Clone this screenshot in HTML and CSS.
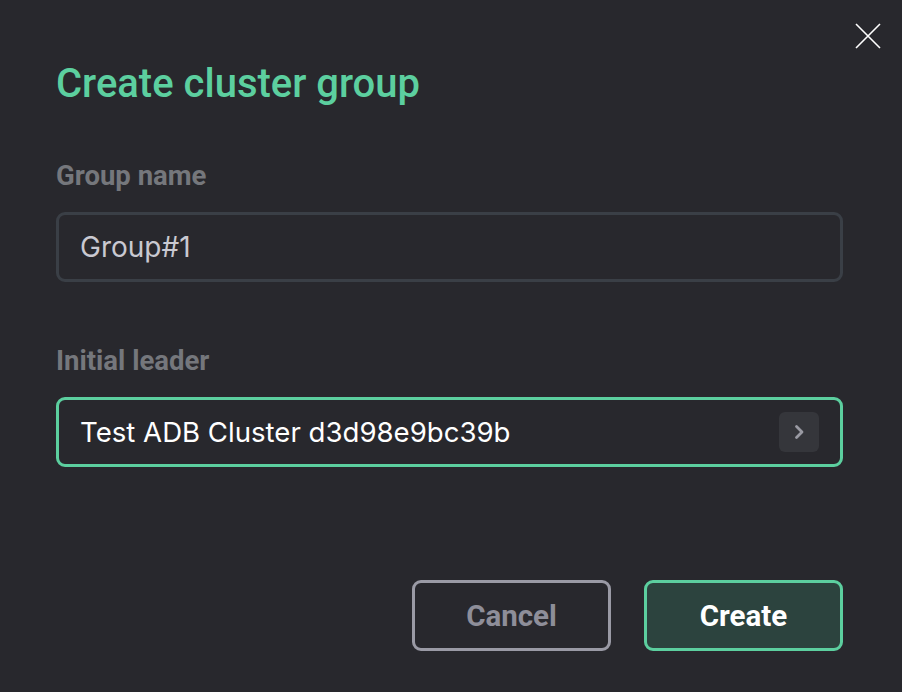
FILE: index.html
```html
<!doctype html>
<html>
    <head>
        <title>Create cluster group</title>
        <link rel="stylesheet" href="styles.css">
    </head>
    <body>
        <div class="modal">
            <button class="close" aria-label="Close">
                <svg width="26" height="26" viewBox="0 0 26 26">
                    <path d="M1 1L25 25M25 1L1 25" stroke="#fff" stroke-width="1.6" fill="none" />
                </svg>
            </button>

            <h1 class="title">Create cluster group</h1>

            <div class="field">
                <label class="label">Group name</label>
                <div class="input">Group#1</div>
            </div>

            <div class="field">
                <label class="label">Initial leader</label>
                <div class="input select">
                    <span>Test ADB Cluster d3d98e9bc39b</span>
                    <span class="chev">
                        <svg width="12" height="16" viewBox="0 0 12 16">
                            <path d="M3.5 2.5L9 8L3.5 13.5" stroke="#9a9aa3" stroke-width="2.8" fill="none" stroke-linecap="round" stroke-linejoin="round" />
                        </svg>
                    </span>
                </div>
            </div>

            <div class="actions">
                <button class="btn cancel">Cancel</button>
                <button class="btn create">Create</button>
            </div>
        </div>
    </body>
</html>
```

FILE: styles.css
```css
* {
    box-sizing: border-box;
}
html,
body {
    margin: 0;
    padding: 0;
    background: #28282d;
}

.modal {
    width: 902px;
    height: 692px;
    position: relative;
    padding: 56px 59px 0 56px;
    font-family: Roboto, "Noto Sans", sans-serif;

    .close {
        position: absolute;
        top: 23px;
        right: 21px;
        background: none;
        border: 0;
        padding: 0;
        cursor: pointer;
        display: flex;
    }

    .title {
        margin: 0;
        font-size: 40px;
        font-weight: 500;
        line-height: 56px;
        color: #5ccf9f;
    }
}

.field {
    margin-top: 48px;

    & + .field {
        margin-top: 63px;
    }

    .label {
        display: block;
        font-size: 27.5px;
        font-weight: 700;
        line-height: 32px;
        color: #75777c;
        margin-bottom: 20px;
    }
}

.input {
    height: 70px;
    border: 3px solid #3a3f46;
    border-radius: 9px;
    padding: 0 21px;
    display: flex;
    align-items: center;
    font-family: Inter, "Noto Sans", sans-serif;
    font-size: 28px;
    color: #c9c9d1;

    &.select {
        border-color: #5ccf9f;
        color: #fff;
        font-size: 27.6px;
        justify-content: space-between;
        padding-right: 21px;
    }

    .chev {
        width: 40px;
        height: 40px;
        border-radius: 6px;
        background: #35363b;
        display: grid;
        place-items: center;
    }
}

.actions {
    display: flex;
    justify-content: flex-end;
    gap: 33px;
    margin-top: 113px;

    .btn {
        width: 199px;
        height: 71px;
        border-radius: 9px;
        border: 3px solid;
        font-family: Roboto, "Noto Sans", sans-serif;
        font-size: 29.5px;
        font-weight: 700;
        cursor: pointer;
    }

    .cancel {
        background: transparent;
        border-color: #9a9aa5;
        color: #8e8e99;
    }

    .create {
        background: #2c433e;
        border-color: #5ccf9f;
        color: #fff;
    }
}
```
